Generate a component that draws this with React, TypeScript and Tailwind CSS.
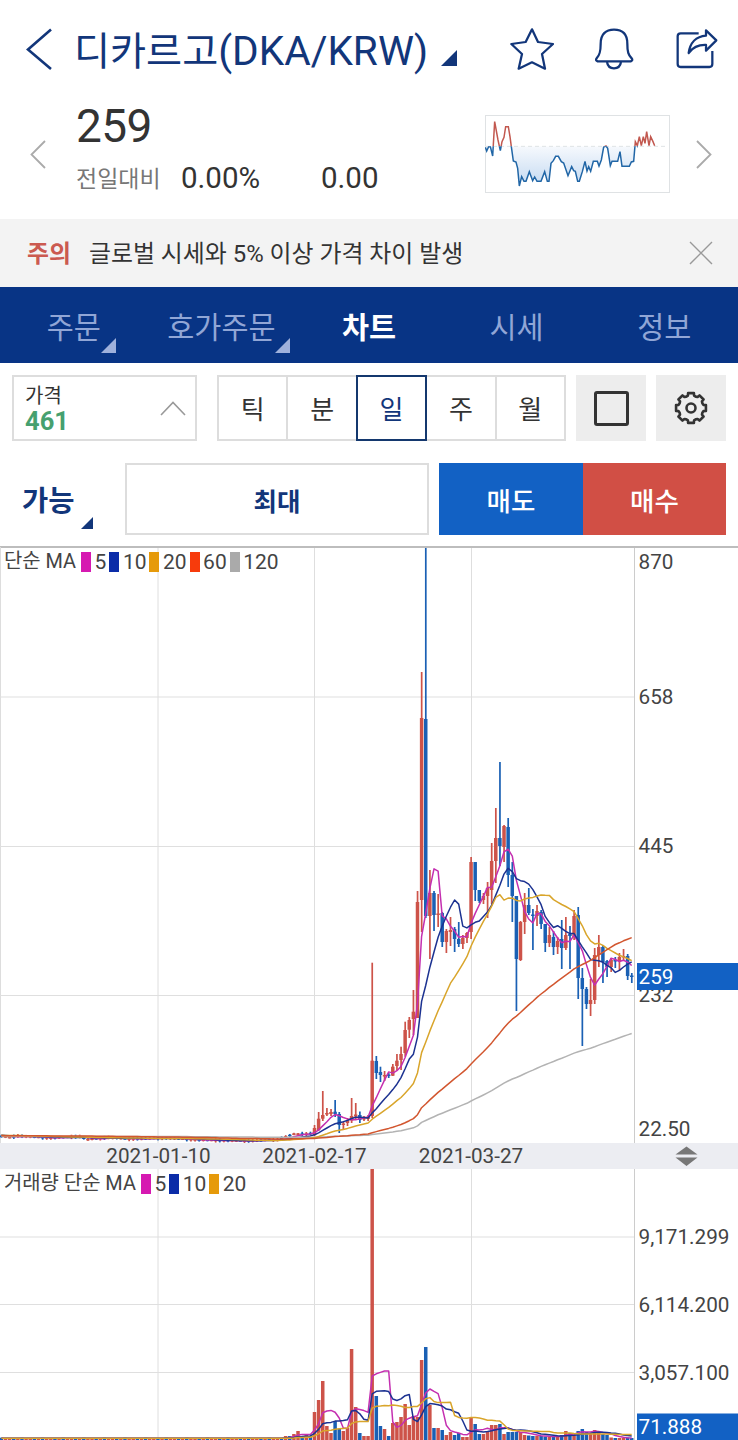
import { useState } from "react";

type Candle = [high: number, top: number, bottom: number, low: number, up: 0 | 1, volume: number];

const STEP = 4.12;
const ORIGIN = 314.5;
const PLOT_TOP = 547;
const VOLUME_TOP = 1169;
const VOLUME_BASE = 1439.6;

const RED = "#cd5349";
const BLUE = "#1a60b4";

const MA_COLORS = {
  5: "#c42fb0",
  10: "#1c3291",
  20: "#d9a52b",
  60: "#d2562f",
  120: "#b3b3b3",
};

// first entry is 2021-02-17, vertical positions in plot pixels
const candles: Candle[] = [
  [1125, 1128, 1135, 1136, 1, 1412],
  [1112, 1118.7, 1130, 1131, 1, 1400],
  [1091, 1115, 1118.7, 1121, 1, 1381],
  [1108, 1113, 1114.5, 1116, 1, 1426],
  [1109, 1112, 1114, 1116, 1, 1433],
  [1100, 1111.7, 1114, 1117, 0, 1421],
  [1112, 1114, 1125, 1133, 0, 1429],
  [1122, 1123.5, 1125, 1129, 1, 1431],
  [1118, 1120, 1123, 1126, 1, 1428],
  [1098, 1116, 1120.5, 1123, 1, 1349],
  [1103, 1114.5, 1116.5, 1119, 1, 1407],
  [1111.5, 1115, 1120, 1123, 0, 1433],
  [1116, 1118, 1119.5, 1121, 1, 1436],
  [1115, 1117, 1119, 1121, 1, 1436],
  [962.7, 1060.7, 1116, 1118, 1, 1168],
  [1056, 1061, 1073, 1079, 0, 1396],
  [1066.7, 1072, 1075, 1082, 0, 1426],
  [1071, 1075, 1076.5, 1081, 1, 1429],
  [1073, 1074.5, 1076, 1078, 0, 1436],
  [1064, 1066.7, 1075.7, 1076, 1, 1423],
  [1054, 1060.7, 1066, 1070, 1, 1422],
  [1046.7, 1054, 1060, 1070, 1, 1417],
  [1021.7, 1030, 1053, 1056.7, 1, 1404],
  [1017, 1020, 1029.7, 1038, 1, 1425],
  [990, 1011.7, 1019, 1035, 1, 1416],
  [891, 902, 1018, 1018, 1, 1417],
  [672, 718, 900, 932, 1, 1360],
  [547, 719, 916, 918, 0, 1347],
  [870, 893, 916, 959, 1, 1405],
  [891, 893, 915, 931, 0, 1428],
  [894, 913.5, 915, 927, 1, 1428],
  [912, 913, 942, 947, 0, 1430],
  [929, 931, 942, 953, 1, 1435],
  [917, 930, 932, 946, 1, 1432],
  [927, 929, 939, 952, 0, 1435],
  [922, 939, 944, 947, 0, 1433],
  [935, 938, 944, 949, 1, 1437],
  [932, 933, 938, 943, 1, 1437],
  [857, 862, 932, 939, 1, 1418],
  [862, 862, 890, 901, 0, 1424],
  [890, 890, 901, 903, 0, 1434],
  [893, 896, 900, 904, 1, 1434],
  [882, 888, 896, 918, 1, 1431],
  [843, 861, 890, 904, 1, 1425],
  [808, 838, 861, 883, 1, 1425],
  [762, 838, 846, 866, 0, 1424],
  [825, 826, 847, 862, 1, 1434],
  [818, 827, 875, 887, 0, 1432],
  [862, 875, 896, 922, 0, 1432],
  [896, 896, 959, 1011, 0, 1432],
  [921, 922, 960, 961, 1, 1432],
  [893, 905, 922, 934, 1, 1435],
  [888, 905, 913, 915, 0, 1435.5],
  [909, 914.5, 916, 950, 0, 1436],
  [905, 911, 916, 926, 1, 1436],
  [910, 912, 924, 929, 0, 1436],
  [924, 924, 943, 952, 0, 1436.5],
  [927, 935, 943, 947, 1, 1437],
  [931, 937, 947, 955, 0, 1437],
  [937, 941, 947, 954, 1, 1436.5],
  [920, 939, 948, 969, 0, 1435],
  [917, 935, 948, 950, 1, 1431],
  [926, 934, 936, 969, 0, 1433],
  [910, 916, 937, 940, 1, 1434.5],
  [907, 915, 978, 999, 0, 1431],
  [968, 978, 989, 1046, 0, 1429],
  [987, 989, 1004, 1009, 0, 1432],
  [979, 1000, 1004, 1016, 1, 1434],
  [948, 955, 1000, 1004, 1, 1430],
  [935, 947, 955, 967, 1, 1433],
  [945, 947, 962, 983, 0, 1434],
  [960, 961, 967, 977, 0, 1435],
  [958, 960, 967, 972, 1, 1437.5],
  [957, 960, 961.5, 968, 0, 1438],
  [953, 957, 961, 971, 1, 1438],
  [949, 956, 957.5, 960, 1, 1438],
  [954, 956, 976, 980, 0, 1437.5],
  [973, 975.5, 977, 983, 0, 1438],
];

// flat stretch before the rally: [day offset, close]
const quietAnchors = [
  [-200, 1138], [-78, 1135], [-74, 1137.5], [-72, 1136], [-64, 1138], [-57, 1136.5],
  [-55, 1139.5], [-50, 1137.5], [-45, 1139], [-36, 1138], [-28, 1140], [-17, 1141],
  [-9, 1139.5], [-5, 1134], [-2, 1134], [0, 1133],
];

function quietClose(k: number) {
  const i = quietAnchors.findIndex((a) => a[0] >= k);
  if (i <= 0) return quietAnchors[0][1];
  const [x0, y0] = quietAnchors[i - 1];
  const [x1, y1] = quietAnchors[i];
  return y0 + ((y1 - y0) * (k - x0)) / (x1 - x0);
}

const quiet: Candle[] = Array.from({ length: 200 }, (_, i) => {
  const k = i - 200;
  const y = quietClose(k);
  const up = (i * 7) % 5 < 3 ? 1 : 0;
  const wick = 1 + ((i * 13) % 7) / 5;
  const volume = k > -8 ? [1437, 1436, 1436, 1434, 1431, 1436, 1435, 1436][k + 8] : 1439 - ((i * 11) % 5) / 3;
  return [y - wick, y - 0.6, y + 0.9, y + wick, up, volume];
});

const all = [...quiet, ...candles];
const closes = all.map((c) => (c[4] ? c[1] : c[2]));
const volumes = all.map((c) => c[5]);

const xOf = (i: number) => ORIGIN + (i - quiet.length) * STEP;

function average(values: number[], period: number) {
  const points: string[] = [];
  for (let i = quiet.length - 76; i < values.length; i++) {
    const slice = values.slice(i - period + 1, i + 1);
    const mean = slice.reduce((a, b) => a + b, 0) / period;
    points.push(`${xOf(i).toFixed(1)},${mean.toFixed(1)}`);
  }
  return points.join(" ");
}

const gearPath = Array.from({ length: 8 }, (_, i) => {
  const at = (deg: number, r: number) => {
    const a = ((i * 45 + deg - 90) * Math.PI) / 180;
    return `${(18 + r * Math.cos(a)).toFixed(2)} ${(18 + r * Math.sin(a)).toFixed(2)}`;
  };
  return `${i ? "L" : "M"}${at(-14, 12.8)}L${at(-11, 15.2)}L${at(11, 15.2)}L${at(14, 12.8)}L${at(22.5, 12.3)}`;
}).join("") + "Z";

const SPARK =
  "352,442 356,453 362,440 367,440 374,468 380,365 390,420 397,452 402,425 408,412 413,380 421,380 426,410 430,440 436,483 444,486 449,505 454,558 461,530 468,544 474,544 484,515 494,542 500,531 507,544 519,544 530,515 538,544 543,544 549,490 556,482 563,469 571,469 580,485 587,489 600,527 611,500 617,512 622,514 629,544 634,544 643,515 651,484 657,513 662,500 668,514 676,484 688,484 693,498 700,480 707,441 714,438 719,445 727,497 732,484 749,484 756,455 762,499 784,499 790,486 797,484 802,425 808,437 814,410 820,437 826,410 831,430 836,395 843,437 848,410 855,425 860,437";

function Corner({ size, className }: { size: number; className: string }) {
  return (
    <svg width={size} height={size} viewBox="0 0 10 10" className={className}>
      <path d="M10 0V10H0Z" fill="currentColor" />
    </svg>
  );
}

function Header() {
  return (
    <header className="flex h-[98px] items-center text-[#12367a]">
      <svg width="26" height="44" viewBox="0 0 26 44" className="ml-[26px] shrink-0" fill="none" stroke="currentColor" strokeWidth="2.6">
        <path d="M25 2.5L2 22.5L25 42" />
      </svg>
      <h1 className="mt-1 ml-[22px] w-[356px] shrink-0 whitespace-nowrap text-[39.2px] leading-[60px]">
        디카르고<span className="text-[40.6px]">(DKA/KRW)</span>
      </h1>
      <Corner size={16} className="mt-[18px] ml-[11px] shrink-0" />
      <svg width="44" height="44" viewBox="427 82 132 132" className="ml-[53px] shrink-0" fill="none" stroke="currentColor" strokeWidth="6.8" strokeLinejoin="round">
        <path d="M493 89L511 127L556 133L523 163L532 207L493 188L453 207L463 163L431 133L474 127Z" />
      </svg>
      <svg width="44" height="44" viewBox="674 82 132 132" className="ml-[38px] shrink-0" fill="none" stroke="currentColor" strokeWidth="6.8" strokeLinejoin="round">
        <path d="M691 185Q683 182 688 176C697 166 700 157 700 132C700 104 715 90 740 90S780 104 780 132C780 157 783 166 793 176Q798 182 790 185Z" />
        <path d="M719 187C721 200 730 206 740 206S759 200 761 187" />
      </svg>
      <svg width="44" height="44" viewBox="921 82 132 132" className="ml-[39px] shrink-0" fill="none" stroke="currentColor" strokeWidth="6.8" strokeLinejoin="round">
        <path d="M992 101H938Q929 101 929 110V193Q929 202 938 202H1024Q1033 202 1033 193V154" />
        <path d="M1014 92L1045 122L1014 153V136C991 135 974 144 962 160C966 130 984 110 1014 108Z" />
      </svg>
    </header>
  );
}

function Quote() {
  return (
    <section className="flex h-[121px] text-[#333]">
      <svg width="16" height="29" viewBox="0 0 16 29" className="mt-[42px] ml-[30px] shrink-0" fill="none" stroke="#aaa" strokeWidth="1.8">
        <path d="M15 1L1.5 14.5L15 28" />
      </svg>
      <div className="ml-[30px] w-[409px]">
        <div className="text-[46px] leading-[56px] tracking-[-0.6px]">259</div>
        <div className="flex h-[48px] items-center text-[29.5px]">
          <span className="mt-1 w-[105px] text-[23px] text-[#777]">전일대비</span>
          <span className="w-[140px]">0.00%</span>
          <span>0.00</span>
        </div>
      </div>
      <svg width="185" height="78" viewBox="351 345 555 234" className="mt-[17px] shrink-0">
        <defs>
          <linearGradient id="sparkFill" x1="0" y1="439" x2="0" y2="560" gradientUnits="userSpaceOnUse">
            <stop offset="0" stopColor="#f6f9fd" />
            <stop offset="1" stopColor="#c3d9f1" />
          </linearGradient>
          <clipPath id="above">
            <rect x="351" y="345" width="555" height="94" />
          </clipPath>
          <clipPath id="below">
            <rect x="351" y="439" width="555" height="140" />
          </clipPath>
        </defs>
        <rect x="352.5" y="346.5" width="552" height="231" fill="#fff" stroke="#dfe2e4" strokeWidth="3" />
        <polygon points={`352,439 ${SPARK} 860,439`} fill="url(#sparkFill)" clipPath="url(#below)" />
        <path d="M354 439H900" stroke="#dfe3e5" strokeWidth="3" strokeDasharray="12 9" />
        <polyline points={SPARK} fill="none" stroke="#c2584f" strokeWidth="4.5" clipPath="url(#above)" />
        <polyline points={SPARK} fill="none" stroke="#2166a6" strokeWidth="4.5" clipPath="url(#below)" />
      </svg>
      <svg width="16" height="29" viewBox="0 0 16 29" className="mt-[42px] ml-[26px] shrink-0" fill="none" stroke="#aaa" strokeWidth="1.8">
        <path d="M1 1L14.5 14.5L1 28" />
      </svg>
    </section>
  );
}

function Notice() {
  return (
    <div className="flex h-[68px] items-center bg-[#f3f3f3] pt-[3px] pr-[25px] pl-[27px] text-[23.9px] text-[#333]">
      <b className="w-[62px] font-bold text-[#cb5a50]">주의</b>
      <span className="flex-1 whitespace-nowrap">글로벌 시세와 5% 이상 가격 차이 발생</span>
      <svg width="24" height="24" viewBox="0 0 24 24" stroke="#999" strokeWidth="1.4" className="mb-[3px]">
        <path d="M1 1L23 23M23 1L1 23" />
      </svg>
    </div>
  );
}

const tabs = [
  { name: "주문", more: true },
  { name: "호가주문", more: true },
  { name: "차트" },
  { name: "시세" },
  { name: "정보" },
];

function Tabs() {
  return (
    <nav className="grid h-[76px] grid-cols-5 bg-[#083485] pt-[7px] text-[29.4px] text-[#91a6d6]">
      {tabs.map((tab) => (
        <div key={tab.name} className="flex items-center justify-center">
          <span className={tab.name === "차트" ? "font-bold text-white" : "relative"}>
            {tab.name}
            {tab.more && <Corner size={15} className="absolute -right-[15px] -bottom-[2px] text-[#9fb1dc]" />}
          </span>
        </div>
      ))}
    </nav>
  );
}

function Toolbar() {
  const [unit, setUnit] = useState("일");

  return (
    <div className="flex h-[78px] items-start pt-3 pl-3">
      <div className="flex h-[66px] w-[185px] items-center justify-between border-2 border-[#ddd] pr-[9px] pl-[11px]">
        <div className="pt-[3px]">
          <div className="text-[20px] leading-[24px] text-[#333]">가격</div>
          <div className="text-[25.5px] leading-[27px] font-bold text-[#46a06f]">461</div>
        </div>
        <svg width="26" height="15" viewBox="0 0 26 15" fill="none" stroke="#999" strokeWidth="1.6">
          <path d="M1 14L13 1.5L25 14" />
        </svg>
      </div>
      <div className="ml-5 flex h-[66px] w-[347px]">
        {["틱", "분", "일", "주", "월"].map((name) => (
          <button
            key={name}
            onClick={() => setUnit(name)}
            className={
              "-mr-[2px] flex-1 border-2 pt-[4px] text-[26px] " +
              (unit === name ? "relative border-[#14386e] text-[#12367a]" : "border-[#ddd] text-[#333]")
            }
          >
            {name}
          </button>
        ))}
      </div>
      <div className="ml-[12px] flex h-[66px] w-[70px] items-center justify-center bg-[#ededed]">
        <div className="size-[35px] rounded-[3px] border-3 border-[#333]" />
      </div>
      <div className="ml-[10px] flex h-[66px] w-[70px] items-center justify-center bg-[#ededed]">
        <svg width="36" height="36" viewBox="0 0 36 36" fill="none" stroke="#333" strokeWidth="2.6" strokeLinejoin="round">
          <path d={gearPath} />
          <circle cx="18" cy="18" r="4.5" />
        </svg>
      </div>
    </div>
  );
}

function OrderRow() {
  return (
    <div className="flex h-[105px] pt-[22px] pl-[22px] font-medium">
      <div className="relative flex h-[72px] w-[103px] items-center pt-[7px] text-[28.5px] font-bold text-[#12367a]">
        가능
        <Corner size={12} className="absolute bottom-[6px] left-[59px]" />
      </div>
      <div className="flex h-[72px] w-[304px] items-center justify-center border-2 border-[#ddd] pt-[6px] text-[25.5px] font-bold text-[#12367a]">
        최대
      </div>
      <button className="ml-[10px] h-[72px] w-[144px] bg-[#1261c4] pt-[6px] text-[26.5px] text-white">매도</button>
      <button className="h-[72px] w-[143px] bg-[#d14f45] pt-[6px] text-[26.5px] text-white">매수</button>
    </div>
  );
}

function Legend({ title, items }: { title: string; items: [string, string][] }) {
  return (
    <div className="flex h-[24px] items-center gap-[3px] pl-1 text-[21px] leading-[24px] text-[#444]">
      <span className="pr-[2px] text-[19.9px] whitespace-nowrap">{title}</span>
      {items.map(([label, color]) => (
        <span key={label} className="flex items-center gap-[3.5px]">
          <i className="h-5 w-[10px]" style={{ background: color }} />
          {label}
        </span>
      ))}
    </div>
  );
}

const gridX = [158, 314.5, 471.5];

function Chart() {
  return (
    <div className="relative h-[894px]">
      <svg width="738" height="894" viewBox="0 546 738 894" className="block text-[20.7px]" fill="none">
        <path d="M0 547H738" stroke="#bdbdbd" strokeWidth="2" />
        <path d="M0.5 547V1143" stroke="#ddd" />
        {gridX.map((x) => (
          <path key={x} d={`M${x} 548V1143M${x} 1169V1440`} stroke="#dedede" />
        ))}
        <path d="M0 697H634M0 846.5H634M0 995.5H634M0 1237H634M0 1304.5H634M0 1372.5H634" stroke="#dfdfdf" />
        <path d="M634.5 548V1440" stroke="#ccc" />

        {all.map(([high, top, bottom, low, up, volume], i) => {
          const x = xOf(i);
          if (x < 0) return null;
          const color = up ? RED : BLUE;
          return (
            <g key={i} fill={color}>
              <rect x={x - 0.8} y={Math.max(high, PLOT_TOP + 1)} width="1.7" height={low - Math.max(high, PLOT_TOP + 1)} />
              <rect x={x - 1.75} y={top} width="3.5" height={bottom - top} />
              <rect x={x - 1.75} y={Math.max(volume, VOLUME_TOP)} width="3.5" height={VOLUME_BASE + 1 - Math.max(volume, VOLUME_TOP)} />
            </g>
          );
        })}

        <g strokeWidth="1.5" strokeLinejoin="round">
          <polyline points={average(closes, 5)} stroke={MA_COLORS[5]} />
          <polyline points={average(closes, 10)} stroke={MA_COLORS[10]} />
          <polyline points={average(closes, 120)} stroke={MA_COLORS[120]} />
          <polyline points={average(closes, 20)} stroke={MA_COLORS[20]} />
          <polyline points={average(closes, 60)} stroke={MA_COLORS[60]} />
          <polyline points={average(volumes, 5)} stroke={MA_COLORS[5]} />
          <polyline points={average(volumes, 10)} stroke={MA_COLORS[10]} />
          <polyline points={average(volumes, 20)} stroke={MA_COLORS[20]} />
        </g>

        <rect x="0" y="1143" width="738" height="26" fill="#ecedf2" />
        <g fill="#444">
          <text x="158.5" y="1163" textAnchor="middle">2021-01-10</text>
          <text x="314.5" y="1163" textAnchor="middle">2021-02-17</text>
          <text x="471" y="1163" textAnchor="middle">2021-03-27</text>
          <text x="638.5" y="569">870</text>
          <text x="638.5" y="704">658</text>
          <text x="638.5" y="853">445</text>
          <text x="638.5" y="1002">232</text>
          <text x="638.5" y="1136">22.50</text>
          <text x="638.5" y="1244">9,171.299</text>
          <text x="638.5" y="1312">6,114.200</text>
          <text x="638.5" y="1380">3,057.100</text>
        </g>
        <path d="M675.5 1154.5L686.5 1146.5L697.5 1154.5ZM675.5 1157.5H697.5L686.5 1166Z" fill="#777" />
        <path d="M637 963H738V990H637ZM637 1413.5H738V1440H637Z" fill="#1261c4" />
        <g fill="#fff">
          <text x="638.5" y="983.5">259</text>
          <text x="638.5" y="1434">71.888</text>
        </g>
      </svg>
      <div className="absolute top-1 left-0">
        <Legend
          title="단순 MA"
          items={[["5", "#d619b1"], ["10", "#0b2ca8"], ["20", "#e69a0a"], ["60", "#f73b0c"], ["120", "#aaaaaa"]]}
        />
      </div>
      <div className="absolute top-[626px] left-0">
        <Legend title="거래량 단순 MA" items={[["5", "#d619b1"], ["10", "#0b2ca8"], ["20", "#e69a0a"]]} />
      </div>
    </div>
  );
}

export default function App() {
  return (
    <main className="h-[1440px] w-[738px] overflow-hidden bg-white font-['Roboto','Noto_Sans_CJK_KR',sans-serif]">
      <Header />
      <Quote />
      <Notice />
      <Tabs />
      <Toolbar />
      <OrderRow />
      <Chart />
    </main>
  );
}
